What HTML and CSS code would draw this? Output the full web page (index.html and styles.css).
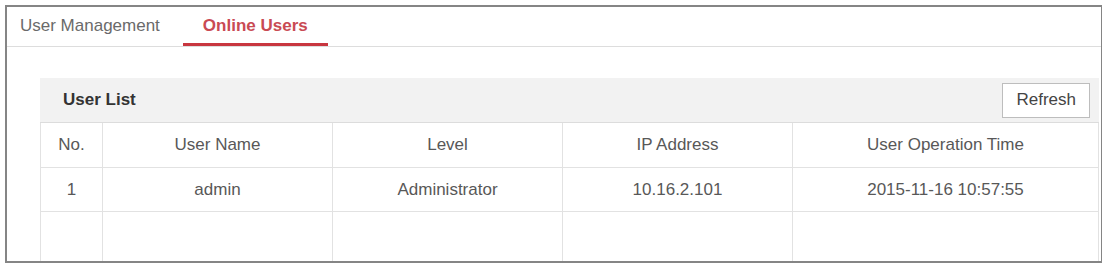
FILE: index.html
```html
<!DOCTYPE html>
<html lang="en">
<head>
<meta charset="UTF-8">
<title>Online Users</title>
<link rel="stylesheet" href="styles.css">
</head>
<body>
<div class="frame">
    <div class="tabs">
        <div class="tab">User Management</div>
        <div class="tab active">Online Users</div>
    </div>
    <div class="panel">
        <div class="panel-head">
            <span class="panel-title">User List</span>
            <button type="button" class="btn">Refresh</button>
        </div>
        <table class="grid">
            <colgroup>
                <col class="col-no">
                <col class="col-std">
                <col class="col-std">
                <col class="col-std">
                <col>
            </colgroup>
            <thead>
                <tr>
                    <th>No.</th>
                    <th>User Name</th>
                    <th>Level</th>
                    <th>IP Address</th>
                    <th>User Operation Time</th>
                </tr>
            </thead>
            <tbody>
                <tr>
                    <td>1</td>
                    <td>admin</td>
                    <td>Administrator</td>
                    <td>10.16.2.101</td>
                    <td>2015-11-16 10:57:55</td>
                </tr>
                <tr class="empty">
                    <td></td>
                    <td></td>
                    <td></td>
                    <td></td>
                    <td></td>
                </tr>
            </tbody>
        </table>
    </div>
</div>
</body>
</html>
```

FILE: styles.css
```css
body {
    margin: 5px;
    font-family: "Liberation Sans", Arial, sans-serif;
    font-size: 17px;
    background: #fff;
}
.frame {
    width: 1094px;
    height: 254px;
    border: 2px solid #858585;
    overflow: hidden;
}
.tabs {
    display: flex;
    gap: 23px;
    height: 39px;
    padding-left: 13px;
    border-bottom: 1px solid #ddd;
}
.tab {
    box-sizing: border-box;
    height: 39px;
    padding-top: 2px;
    line-height: 34px;
    color: #6a6a6a;
    border-bottom: 3px solid transparent;
}
.tab.active {
    padding-left: 20px;
    padding-right: 20px;
    color: #c94a53;
    font-weight: bold;
    border-bottom-color: #c8363f;
}
.panel {
    margin: 31px 2px 0 33px;
}
.panel-head {
    display: flex;
    align-items: center;
    justify-content: space-between;
    height: 44px;
    padding: 0 9px 0 23px;
    background: #f2f2f2;
    border-bottom: 1px solid #dcdcdc;
}
.panel-title {
    font-weight: bold;
    color: #333;
}
.btn {
    height: 35px;
    padding: 0 13px;
    font-family: inherit;
    font-size: 17px;
    color: #444;
    background: #fff;
    border: 1px solid #bdbdbd;
}
.grid {
    width: 100%;
    border-collapse: collapse;
    table-layout: fixed;
}
.col-no {
    width: 62px;
}
.col-std {
    width: 230px;
}
.grid th, .grid td {
    border: 1px solid #e2e2e2;
    text-align: center;
    font-weight: normal;
    color: #585858;
    padding: 0;
}
.grid th {
    border-top: 0;
    height: 44px;
}
.grid td {
    height: 43px;
}
.grid .empty td {
    height: 70px;
}
```
